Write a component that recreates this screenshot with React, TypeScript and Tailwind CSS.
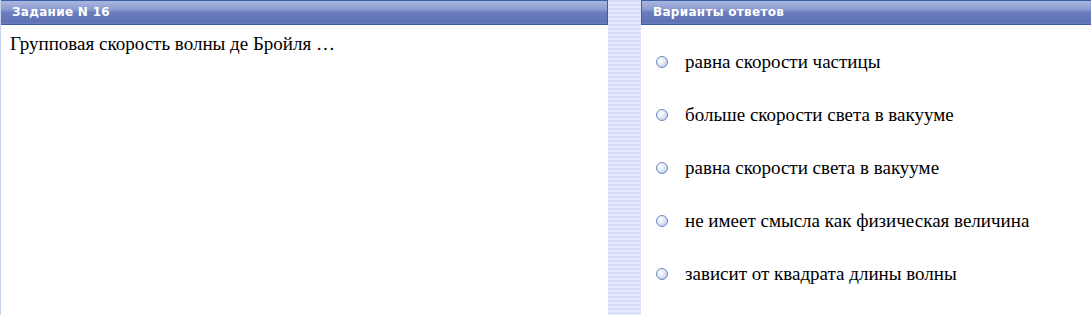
const options = [
  "равна скорости частицы",
  "больше скорости света в вакууме",
  "равна скорости света в вакууме",
  "не имеет смысла как физическая величина",
  "зависит от квадрата длины волны",
];

const Header = ({ title, className = "" }: { title: string; className?: string }) => (
  <div
    className={`h-[25px] border-y border-[#3c5fa3] bg-[linear-gradient(to_bottom,#a9b6e0_0%,#8d9dd2_35%,#6a7dbd_50%,#5f72b6_90%,#6b7fc0_100%)] pl-[11px] text-[12px] leading-[22px] font-bold text-white tracking-[0.3px] ${className}`}
    style={{ fontFamily: '"DejaVu Sans", Verdana, sans-serif' }}
  >
    {title}
  </div>
);

const Radio = () => (
  <span className="inline-block h-[12px] w-[12px] shrink-0 rounded-full border border-[#6c8ac0] bg-[radial-gradient(circle_at_35%_35%,#ffffff_0%,#e6ecf7_40%,#a9bfe0_100%)]" />
);

export default function App() {
  return (
    <div className="flex h-[315px] w-[1091px] bg-white font-['Liberation_Serif','Times_New_Roman',serif]">
      <div className="flex w-[608px] flex-col border-l border-[#c9d3f0]">
        <Header title="Задание N 16" className="border-r" />
        <p className="pl-[9px] pt-[8px] text-[19px] leading-[22px] text-black">Групповая скорость волны де Бройля …</p>
      </div>
      <div className="w-[33px] bg-[repeating-linear-gradient(to_bottom,#d6ddf8_0px,#d6ddf8_2px,#e6eafc_2px,#e6eafc_4px)]" />
      <div className="flex flex-1 flex-col">
        <Header title="Варианты ответов" className="border-l" />
        <div className="flex flex-col gap-[31px] pl-[15px] pt-[26px]">
          {options.map((o) => (
            <div key={o} className="flex h-[22px] items-center gap-[17px] text-[19px] text-black">
              <Radio />
              <span>{o}</span>
            </div>
          ))}
        </div>
      </div>
    </div>
  );
}
